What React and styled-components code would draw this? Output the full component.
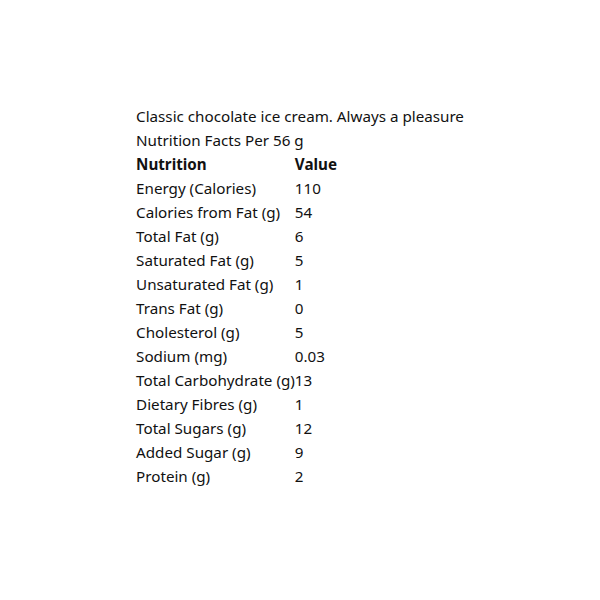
import React from "react";
import styled, { createGlobalStyle } from "styled-components";

const Global = createGlobalStyle`
  html, body { margin: 0; padding: 0; background: #fff; }
  body { font-family: "Noto Sans", sans-serif; color: #111; }
`;

const Page = styled.div`
  width: 600px;
  height: 600px;
  box-sizing: border-box;
  padding-bottom: 8px;
  display: flex;
  align-items: center;
  justify-content: center;
`;

const Card = styled.div`
  display: flex;
  flex-direction: column;
  align-items: flex-start;
  font-size: 15.2px;
  line-height: 24px;
`;

const Line = styled.div``;

const Table = styled.table`
  border-collapse: collapse;
  font-size: 15.2px;
  line-height: 24px;
  td, th { padding: 0; text-align: left; }
  th { font-weight: 700; }
`;

const rows = [
  ["Energy (Calories)", "110"],
  ["Calories from Fat (g)", "54"],
  ["Total Fat (g)", "6"],
  ["Saturated Fat (g)", "5"],
  ["Unsaturated Fat (g)", "1"],
  ["Trans Fat (g)", "0"],
  ["Cholesterol (g)", "5"],
  ["Sodium (mg)", "0.03"],
  ["Total Carbohydrate (g)", "13"],
  ["Dietary Fibres (g)", "1"],
  ["Total Sugars (g)", "12"],
  ["Added Sugar (g)", "9"],
  ["Protein (g)", "2"],
];

export default function App() {
  return (
    <Page>
      <Global />
      <Card>
        <Line>Classic chocolate ice cream. Always a pleasure</Line>
        <Line>Nutrition Facts Per 56 g</Line>
        <Table>
          <thead>
            <tr><th>Nutrition</th><th>Value</th></tr>
          </thead>
          <tbody>
            {rows.map(([k, v]) => (
              <tr key={k}><td>{k}</td><td>{v}</td></tr>
            ))}
          </tbody>
        </Table>
      </Card>
    </Page>
  );
}
